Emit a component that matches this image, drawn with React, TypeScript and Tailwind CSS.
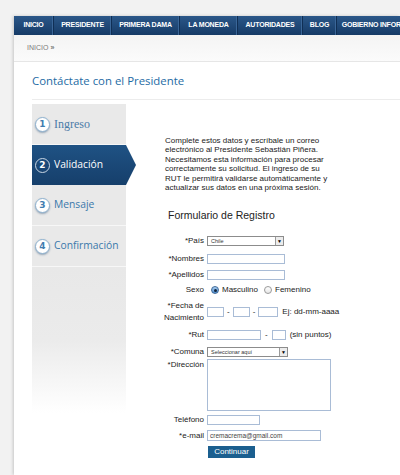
const navItems = [
  { label: "INICIO", w: "w-[40px]" },
  { label: "PRESIDENTE", w: "w-[58px]" },
  { label: "PRIMERA DAMA", w: "w-[68px]" },
  { label: "LA MONEDA", w: "w-[58px]" },
  { label: "AUTORIDADES", w: "w-[65px]" },
  { label: "BLOG", w: "w-[34px]" },
  { label: "GOBIERNO INFORMA", w: "w-[80px]" },
];

const Circle = ({ n, active }: { n: string; active?: boolean }) =>
  active ? (
    <span className="flex h-[15px] w-[15px] shrink-0 items-center justify-center rounded-full border-[1.5px] border-[#c9d6e4] text-[9px] font-bold leading-none text-white font-['DejaVu_Sans',sans-serif]">
      {n}
    </span>
  ) : (
    <span className="flex h-[15px] w-[15px] shrink-0 items-center justify-center rounded-full border border-[#8fb2cf] bg-white text-[9px] font-bold leading-none text-[#3f7db0] shadow-[0_1px_2px_rgba(40,80,120,0.45)] font-['DejaVu_Sans',sans-serif]">
      {n}
    </span>
  );

const Select = ({ text, w }: { text: string; w: string }) => (
  <div className={`flex h-[10px] ${w} border border-[#8c8c8c] bg-white`}>
    <span className="flex-1 pl-[3px] text-[5.5px] leading-[8px] text-[#333]">{text}</span>
    <span className="flex w-[8px] items-center justify-center border-l border-[#9a9a9a] bg-[#ececec] text-[5px] leading-none text-black">
      ▼
    </span>
  </div>
);

const Box = ({ w, h = "h-[10px]", children }: { w: string; h?: string; children?: React.ReactNode }) => (
  <div className={`${w} ${h} border border-[#a9bcd6] bg-white`}>{children}</div>
);

const Row = ({
  label,
  mt,
  h = "h-[10px]",
  top,
  children,
}: {
  label: React.ReactNode;
  mt: string;
  h?: string;
  top?: boolean;
  children: React.ReactNode;
}) => (
  <div className={`flex ${mt} ${h} ${top ? "items-start" : "items-center"}`}>
    <div className={`w-[44px] shrink-0 text-right leading-[12px] ${top ? "pt-[-1px]" : ""}`}>{label}</div>
    <div className="ml-[3px] flex items-center">{children}</div>
  </div>
);

export default function App() {
  return (
    <div className="h-[475px] w-[400px] overflow-hidden bg-[#f2f2f2] pl-[14px] pt-[16px] font-['Liberation_Sans',Arial,sans-serif]">
      <div className="h-full bg-white shadow-[-1px_0_3px_rgba(0,0,0,0.18)]">
        {/* top menu */}
        <nav className="flex h-[19px] overflow-hidden whitespace-nowrap bg-gradient-to-b from-[#2b5789] to-[#163b67] text-[7px] font-bold tracking-[-0.2px] text-white">
          {navItems.map((item) => (
            <div
              key={item.label}
              className={`${item.w} flex shrink-0 items-center justify-center border-r border-[#102f55] shadow-[inset_-1px_0_0_#3a6698]`}
            >
              {item.label}
            </div>
          ))}
        </nav>

        <div className="flex h-[27px] items-center border-b border-[#e6e6e6] bg-gradient-to-b from-[#f4f4f4] to-[#fbfbfb] pl-[13px] text-[7px] text-[#7a7a7a]">
          INICIO <span className="ml-[2px] text-[#444]">»</span>
        </div>

        <div className="ml-[18px] flex h-[38px] items-center border-b border-[#ececec]">
          <h1 className="text-[11.4px] text-[#1e6ba4] font-['Open_Sans',sans-serif]">
            Contáctate con el Presidente
          </h1>
        </div>

        <div className="ml-[18px] mt-[4px] flex">
          {/* steps */}
          <div className="w-[94px] shrink-0">
            <div className="flex h-[41px] items-center gap-[4px] border-b border-[#f7f7f7] bg-[#e9e9e9] pl-[3px]">
              <Circle n="1" />
              <span className="text-[12px] text-[#4b7ca8] font-['Liberation_Serif',serif]">Ingreso</span>
            </div>
            <div className="relative flex h-[40px] items-center gap-[4px] bg-gradient-to-b from-[#1f5284] to-[#163f6b] pl-[3px]">
              <Circle n="2" active />
              <span className="text-[10.3px] text-white font-['Open_Sans',sans-serif]">Validación</span>
              <div className="absolute left-[94px] top-0 h-[40px] w-[10px] bg-gradient-to-b from-[#1f5284] to-[#163f6b] [clip-path:polygon(0_0,100%_50%,0_100%)]" />
            </div>
            <div className="flex h-[41px] items-center gap-[4px] border-b border-[#f7f7f7] bg-[#e9e9e9] pl-[3px]">
              <Circle n="3" />
              <span className="text-[10.3px] text-[#3a78ab] font-['Open_Sans',sans-serif]">Mensaje</span>
            </div>
            <div className="flex h-[41px] items-center gap-[4px] border-b border-[#f7f7f7] bg-[#e9e9e9] pl-[3px]">
              <Circle n="4" />
              <span className="text-[10.3px] text-[#3a78ab] font-['Open_Sans',sans-serif]">Confirmación</span>
            </div>
            <div className="h-[146px] bg-gradient-to-b from-[#e8e8e8] via-[#ebebeb] to-white" />
          </div>

          {/* form */}
          <div className="ml-[34px] flex-1 pt-[32px] text-[8px] text-[#222]">
            <p className="pl-[5px] leading-[9.4px]">
              Complete estos datos y escríbale un correo
              <br />
              electrónico al Presidente Sebastián Piñera.
              <br />
              Necesitamos esta información para procesar
              <br />
              correctamente su solicitud. El ingreso de su
              <br />
              RUT le permitirá validarse automáticamente y
              <br />
              actualizar sus datos en una próxima sesión.
            </p>

            <h2 className="mt-[16.6px] h-[12px] pl-[8px] text-[10.5px] leading-[12px] text-[#222]">
              Formulario de Registro
            </h2>

            <Row label="*País" mt="mt-[15px]">
              <Select text="Chile" w="w-[77px]" />
            </Row>
            <Row label="*Nombres" mt="mt-[8px]">
              <Box w="w-[78px]" />
            </Row>
            <Row label="*Apellidos" mt="mt-[6px]">
              <Box w="w-[78px]" />
            </Row>
            <Row label="Sexo" mt="mt-[5px]">
              <span className="ml-[4px] flex h-[8px] w-[8px] items-center justify-center rounded-full border border-[#3f6a99] bg-gradient-to-b from-[#a9cdf0] to-[#4f8fd0]">
                <span className="h-[3px] w-[3px] rounded-full bg-[#10243c]" />
              </span>
              <span className="ml-[3px]">Masculino</span>
              <span className="ml-[6px] h-[8px] w-[8px] rounded-full border border-[#9a9a9a] bg-gradient-to-b from-white to-[#e6e6e6]" />
              <span className="ml-[3px]">Femenino</span>
            </Row>
            <Row
              label={
                <>
                  *Fecha de
                  <br />
                  Nacimiento
                </>
              }
              mt="mt-[5px]"
              h="h-[24px]"
            >
              <Box w="w-[17px]" />
              <span className="mx-[3px]">-</span>
              <Box w="w-[17px]" />
              <span className="mx-[3px]">-</span>
              <Box w="w-[20px]" />
              <span className="ml-[4px]">Ej: dd-mm-aaaa</span>
            </Row>
            <Row label="*Rut" mt="mt-[6px]">
              <Box w="w-[54px]" />
              <span className="mx-[4px]">-</span>
              <Box w="w-[14px]" />
              <span className="ml-[4px]">(sin puntos)</span>
            </Row>
            <Row label="*Comuna" mt="mt-[7px]">
              <Select text="Seleccionar aquí" w="w-[81px]" />
            </Row>
            <Row label="*Dirección" mt="mt-[2px]" h="h-[52px]" top>
              <Box w="w-[124px]" h="h-[52px]" />
            </Row>
            <Row label="Teléfono" mt="mt-[4px]">
              <Box w="w-[53px]" />
            </Row>
            <Row label="*e-mail" mt="mt-[5px]" h="h-[11px]">
              <Box w="w-[114px]" h="h-[11px]">
                <span className="block pl-[2px] text-[6.5px] leading-[9px] text-[#444]">cremacrema@gmail.com</span>
              </Box>
            </Row>
            <div className="ml-[48px] mt-[5px] flex h-[12px] w-[47px] items-center justify-center bg-[#1b5f8f] text-[8px] text-white">
              Continuar
            </div>
          </div>
        </div>
      </div>
    </div>
  );
}
